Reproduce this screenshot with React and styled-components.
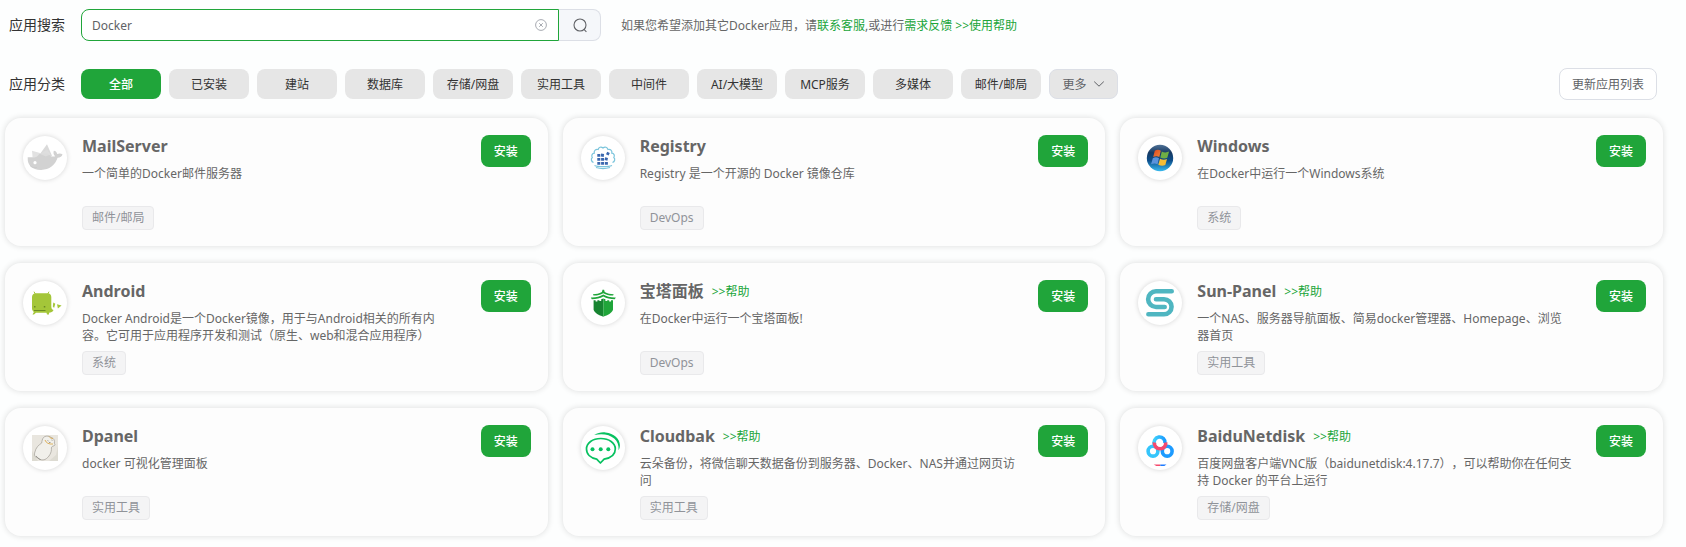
import React, { useState } from "react";
import styled, { createGlobalStyle } from "styled-components";

const GlobalStyle = createGlobalStyle`
  * { box-sizing: border-box; }
  body {
    margin: 0;
    background: #fdfefe;
    color: #606266;
    font-family: "Noto Sans", "Noto Sans CJK SC", sans-serif;
    font-size: 12px;
    line-height: 17px;
    text-spacing-trim: space-all;
  }
  button, input { font: inherit; }
  button { cursor: pointer; }
`;

const Page = styled.main`
  padding: 9px 23px 9px 5px;
`;

const Row = styled.div`
  display: flex;
  align-items: center;
  min-height: 32px;
  padding: 0 6px 0 4px;
  margin-bottom: ${(p) => p.$gap}px;
`;

const RowLabel = styled.label`
  width: 72px;
  flex: none;
  font-size: 14px;
  line-height: 20px;
  color: #333;
`;

const SearchBox = styled.form`
  display: flex;
  width: 520px;
  height: 32px;
`;

const InputFrame = styled.div`
  flex: 1;
  display: flex;
  align-items: center;
  padding: 0 11px 0 10px;
  background: #fff;
  border: 1px solid #20a53a;
  border-radius: 8px 0 0 8px;
`;

const SearchInput = styled.input`
  flex: 1;
  min-width: 0;
  padding: 0;
  border: 0;
  outline: 0;
  background: transparent;
  color: #606266;
`;

const ClearButton = styled.button`
  display: flex;
  padding: 0;
  border: 0;
  background: none;
`;

const SearchButton = styled.button`
  display: flex;
  align-items: center;
  justify-content: center;
  width: 42px;
  padding: 0;
  background: #f5f7fa;
  border: 1px solid #dcdfe6;
  border-left: 0;
  border-radius: 0 8px 8px 0;
`;

const Hint = styled.p`
  margin: 0 0 0 20px;
  color: #666;
`;

const GreenLink = styled.a`
  color: #20a53a;
  text-decoration: none;
`;

const Categories = styled.div`
  display: flex;
  flex: 1;
  gap: 8px;
`;

const Category = styled.button`
  width: 80px;
  height: 30px;
  padding: 0;
  border: 0;
  border-radius: 8px;
  background: ${(p) => (p.$active ? "#20a53a" : "#e6e6e6")};
  color: ${(p) => (p.$active ? "#fff" : "#333")};
  font-weight: ${(p) => (p.$active ? 500 : 400)};
`;

const MoreButton = styled.button`
  display: flex;
  align-items: center;
  justify-content: center;
  gap: 6px;
  width: 69px;
  height: 30px;
  padding: 0;
  border: 1px solid #dcdfe6;
  border-radius: 8px;
  background: #e6e6e6;
  color: #606266;
`;

const UpdateButton = styled.button`
  height: 32px;
  padding: 0 12px;
  border: 1px solid #dcdfe6;
  border-radius: 8px;
  background: #fff;
  color: #606266;
`;

const Grid = styled.section`
  display: grid;
  grid-template-columns: repeat(3, minmax(0, 1fr));
  gap: 17px 15px;
`;

const Card = styled.article`
  display: flex;
  align-items: flex-start;
  min-height: 128px;
  padding: 17px 17px 16px;
  border-radius: 16px;
  background: #fdfdfd;
  box-shadow: 0 0 6px rgba(0, 0, 0, 0.14);
`;

const Logo = styled.div`
  flex: none;
  width: 44px;
  height: 44px;
  margin: 1px 15px 0 1px;
  border-radius: 50%;
  background: #fff;
  box-shadow: 0 0 5px rgba(0, 0, 0, 0.16);

  svg { display: block; width: 44px; height: 44px; }
`;

const Info = styled.div`
  flex: 1;
  min-width: 0;
`;

const Heading = styled.div`
  display: flex;
  align-items: center;
  gap: 8px;
  height: 22px;
`;

const Name = styled.h2`
  margin: 0;
  font-size: 16px;
  line-height: 22px;
  font-weight: 700;
  color: #666;
`;

const Desc = styled.p`
  max-width: 376px;
  min-height: 34px;
  margin: 8px 0 7px;
  color: #666;
`;

const Tag = styled.div`
  width: fit-content;
  height: 24px;
  padding: 0 9px;
  border: 1px solid #e9e9eb;
  border-radius: 4px;
  background: #f4f4f5;
  color: #909399;
  line-height: 22px;
`;

const InstallButton = styled.button`
  flex: none;
  width: 50px;
  height: 32px;
  padding: 0;
  border: 0;
  border-radius: 8px;
  background: #20a53a;
  color: #fff;
  font-weight: 500;
`;

const ClearIcon = () => (
  <svg width="12" height="12" viewBox="0 0 12 12" fill="none" stroke="#a8abb2">
    <circle cx="6" cy="6" r="5.4" />
    <path d="M4.2 4.2l3.6 3.6M7.8 4.2L4.2 7.8" />
  </svg>
);

const SearchIcon = () => (
  <svg width="16" height="16" viewBox="0 0 16 16" fill="none" stroke="#606266" strokeWidth="1.1">
    <circle cx="8" cy="8" r="6" />
    <path d="M12 12.400l2.400 2.400" />
  </svg>
);

const ChevronIcon = () => (
  <svg width="12" height="12" viewBox="0 0 12 12" fill="none" stroke="#606266">
    <path d="M1.2 3.6L6 8.2l4.8-4.6" />
  </svg>
);

const MailServerLogo = () => (
  <svg viewBox="0 0 44 44">
    <path fill="#e2e2e2" d="M9 14.7l8 2.4 1.4 4.4H9.6z" />
    <path fill="#dadada" d="M24 8.3l5 11.4-5 2-7-3.8z" />
    <path fill="#d2d2d2" d="M4.7 21.3h6.8c2-.1 3.200-1.400 4.900-3.400 2.500-.7 6.300-.5 8.600-.2 2.200 2.700 4.500 3.400 7.200 2.500-1.800-1.500-2-3.500-1.400-5.500 2 .2 3 1.500 3.300 3.400 1.700-.9 3.700-1 5.400.2-.4 2-2.300 3.400-4.900 3.500-2.400 7.300-8.200 12-16.400 12.100C9.500 34.100 4.200 29.700 4.700 21.300z" />
    <path fill="#e0e0e0" d="M17 17.9l7-4.500 3.500 5-4.700 2z" opacity=".7" />
    <circle cx="12" cy="26.7" r="1.6" fill="#fff" />
    <path d="M7 29.500c2 2 4 2.500 7 2" stroke="#c9c9c9" strokeWidth=".7" fill="none" />
  </svg>
);

const AndroidLogo = () => (
  <svg viewBox="0 0 44 44">
    <path d="M11 10.700l1.700 3M26 10.700l-1.700 3" stroke="#a4c639" strokeWidth="1" />
    <path fill="#a4c639" d="M13 12.300h11.500c2.300 0 3.800 1.500 3.800 3.800v9.200c0 2 .5 3.200 2.200 3.700-.5 2-2.700 2.700-4.400 2.700l-.1 1.700h-2l-.5-1.700H13l-2 1.900H9.500l1.400-2.500C9.600 30.100 9 28.800 9 27V16.100c0-2.300 1.700-3.800 4-3.800z" />
    <path fill="#a4c639" d="M30.300 21.500l2 1.200-1.200 4.200-1.300-1.300zM34 23.200l4.600 1.300-3.700 3z" />
    <path fill="#6b8a26" d="M11 25h1.500v1.500H11zM20.800 25h1.500v1.500h-1.500zM11 29h11.500v1H11z" />
  </svg>
);

const RegistryLogo = () => (
  <svg viewBox="0 0 44 44">
    <path
      fill="none"
      stroke="#7cc5dc"
      strokeWidth="1.200"
      d="M12.500 28.500c-2.200-.8-2.900-3.500-1.200-5-1.300-2 0-4.200 2-4.300-.6-2.700 1.500-4.400 3.900-3.700.3-2.300 2.900-3.200 4.800-1.500 1.900-1.700 4.500-.8 4.900 1.500 2.500-.7 4.500 1 3.900 3.700 2.100.1 3.300 2.300 2 4.300 1.700 1.500 1 4.200-1.300 5"
      transform="translate(0 -2)"
    />
    <path fill="none" stroke="#7cc5dc" strokeWidth="1.200" d="M13.500 29.500c3 1.500 14 1.500 17.500 0M15 31.500c4 1.200 10 1.200 14 0" />
    <path
      fill="#3a67ae"
      d="M16.300 18h3v2.800h-3zM20.100 17.600l3 .5-.4 2.800-2.800-.3zM16.300 22h3v2.800h-3zM20.100 22h3v2.800h-3zM16.300 25.900h3v2.800h-3zM20.100 25.900h3v2.800h-3zM23.900 25.900h3v2.800h-3zM24.200 21.300l2.800.6-.6 2.800-2.800-.6zM26.200 15.700l2.600 1.200-1.200 2.600L25 18.300z"
    />
  </svg>
);

const WindowsLogo = () => (
  <svg viewBox="0 0 44 44">
    <defs>
      <linearGradient id="orb" x1="0" y1="0" x2="0" y2="1">
        <stop offset="0" stopColor="#4f7196" />
        <stop offset=".3" stopColor="#173a63" />
        <stop offset=".6" stopColor="#0d4f8c" />
        <stop offset="1" stopColor="#39b9ee" />
      </linearGradient>
      <linearGradient id="pane" x1="0" y1="0" x2="1" y2="1">
        <stop offset="0" stopColor="#e0461f" />
        <stop offset="1" stopColor="#f0863a" />
      </linearGradient>
    </defs>
    <circle cx="22" cy="22" r="13.200" fill="url(#orb)" />
    <path fill="url(#pane)" d="M16.800 14.700c2.200-1.200 4.300-1 6 0l-1.500 6.200c-1.900-1-4-1-6.100.2z" />
    <path fill="#6fae45" d="M23.800 15.400c2.300 1.300 4.600 1.300 7.300.2l-1.800 6.200c-2.500 1.100-4.800.8-7-.4z" />
    <path fill="#5b93dc" d="M14.800 22.200c2.200-1.200 4.300-1 6.200 0l-1.500 6c-1.900-1-4.100-1-6.400.1z" />
    <path fill="#f7bd35" d="M22 22.700c2.200 1.200 4.600 1.300 7 .4l-1.700 6c-2.400 1.100-4.700.8-7-.4z" />
  </svg>
);

const BaotaLogo = () => (
  <svg viewBox="0 0 44 44">
    <path fill="#20a53a" d="M21.500 8.700h1.600l.6 2.300c2.800 1.500 5.600 2.200 9 2.200l-.6 1.300c-3.600.1-6.700-.6-9.800-2.300-3.100 1.700-6.200 2.400-9.800 2.300l-.6-1.300c3.400 0 6.200-.7 9-2.200z" />
    <path fill="#20a53a" d="M22.300 13.500c3.500 2.100 7.600 3.200 12.500 3l-1 1.700c-4.500 0-8.300-.8-11.500-2.700-3.200 1.900-7 2.700-11.500 2.700l-1-1.700c4.900.2 9-.9 12.500-3z" />
    <path fill="#178431" d="M12.600 19.300h2v1.200h1.800v-1.300h2V20h1.800v-1.800l2.100-.7v18.200c-4.500-1.700-8.500-3.600-9.700-7z" />
    <path fill="#20a53a" d="M32 19.300h-2v1.200h-1.800v-1.300h-2V20h-1.800v-1.800l-2.100-.7v18.200c4.500-1.700 8.500-3.600 9.700-7z" />
  </svg>
);

const SunPanelLogo = () => (
  <svg viewBox="0 0 44 44" fill="none" stroke="#4fb6c1" strokeWidth="4.600" strokeLinecap="round">
    <path d="M33.700 10.300H18a7.850 7.850 0 0 0 0 15.700h8.700" />
    <path d="M18 18.200h8a7.550 7.550 0 0 1 0 15.100H10.400" />
  </svg>
);

const DpanelLogo = () => (
  <svg viewBox="0 0 44 44">
    <path fill="#e9e6df" d="M9 9h26v26H9z" />
    <path fill="#d6d3ca" d="M9 25l6 10H9zM35 20v15h-9l7-6z" opacity=".6" />
    <path
      fill="#f1f0eb"
      stroke="#a8a59d"
      strokeWidth=".8"
      d="M20.500 11.500c1.500-1.700 5-2 7.500-.2 3 1 4 3.500 3.300 5.900 1 1 .8 2.300-.3 2.600-1.600.4-2.500.8-2.600 2.200.5 4.500-2.400 9.300-6.400 11.500-2.700 1-5.300.3-7.300-1.500-3-.8-3.800-3-2.800-6 .8-4 3.600-7 6.800-9 .2-2 .6-4 1.800-5.500z"
    />
    <path fill="none" stroke="#d9a94e" strokeWidth=".9" d="M22 14c1 3 4 4.500 8 4M26 10.500c1 1.500 2.500 2 4 2" />
    <path fill="none" stroke="#77746e" strokeWidth=".7" d="M24.500 14.500l1 .5M28.500 14l1 .3M26 16.500h1.500M13 30c2 2 3 3 4.500 3.500" />
  </svg>
);

const CloudbakLogo = () => (
  <svg viewBox="0 0 44 44" fill="none" stroke="#07c160" strokeWidth="1.700" strokeLinejoin="round">
    <path d="M19.800 12.500c8.200 0 14.500 4.400 14.500 10.400 0 5.400-4.600 9-11.200 10.200L19.400 37l-3.700-3.900C9.800 32 5.500 28.200 5.500 22.900c0-6 6.100-10.400 14.300-10.400z" />
    <path d="M13.200 8.900c3.700-2 7.300-3 11.300-2.500C33 7.200 38.700 12.500 38.900 19c0 2-.4 3.700-1.300 5.200.3-5.200-1.200-8.700-4.400-11.600-4.800-4.200-11.300-5.200-20-3.700z" fill="#07c160" stroke="none" />
    <g fill="#07c160" stroke="none">
      <circle cx="11.500" cy="23.300" r="2" />
      <circle cx="19.700" cy="23.300" r="2" />
      <circle cx="27.300" cy="23.300" r="2" />
    </g>
  </svg>
);

const BaiduLogo = () => (
  <svg viewBox="0 0 44 44" fill="none" strokeWidth="3.600">
    <defs>
      <linearGradient id="wing" x1="0" y1="0" x2="1" y2="0">
        <stop offset="0" stopColor="#3fd0fb" />
        <stop offset="1" stopColor="#1a9bff" />
      </linearGradient>
    </defs>
    <circle cx="15" cy="25.200" r="4.900" stroke="#35c5fb" />
    <circle cx="29.200" cy="25.200" r="4.900" stroke="#1d9bff" />
    <path d="M27 17.200a5.500 5.500 0 1 0-10.400 1.700" stroke="url(#wing)" />
    <path d="M16.400 16.500c-.4 3.500 2.300 6.300 5.700 6.300s6.200-2.800 5.600-6.300" stroke="#f5496d" />
    <path d="M15.800 38.400h6.500v1.500h-4z" fill="#f5496d" stroke="none" />
    <path d="M22.300 38.400h6.200l-2.200 1.500h-4z" fill="#1d7bff" stroke="none" />
  </svg>
);

const categories = ["全部", "已安装", "建站", "数据库", "存储/网盘", "实用工具", "中间件", "AI/大模型", "MCP服务", "多媒体", "邮件/邮局"];

const apps = [
  { name: "MailServer", desc: "一个简单的Docker邮件服务器", tag: "邮件/邮局", logo: MailServerLogo },
  { name: "Registry", desc: "Registry 是一个开源的 Docker 镜像仓库", tag: "DevOps", logo: RegistryLogo },
  { name: "Windows", desc: "在Docker中运行一个Windows系统", tag: "系统", logo: WindowsLogo },
  { name: "Android", desc: "Docker Android是一个Docker镜像，用于与Android相关的所有内容。它可用于应用程序开发和测试（原生、web和混合应用程序）", tag: "系统", logo: AndroidLogo },
  { name: "宝塔面板", desc: "在Docker中运行一个宝塔面板!", tag: "DevOps", logo: BaotaLogo, help: true },
  { name: "Sun-Panel", desc: "一个NAS、服务器导航面板、简易docker管理器、Homepage、浏览器首页", tag: "实用工具", logo: SunPanelLogo, help: true },
  { name: "Dpanel", desc: "docker 可视化管理面板", tag: "实用工具", logo: DpanelLogo },
  { name: "Cloudbak", desc: "云朵备份，将微信聊天数据备份到服务器、Docker、NAS并通过网页访问", tag: "实用工具", logo: CloudbakLogo, help: true },
  { name: "BaiduNetdisk", desc: "百度网盘客户端VNC版（baidunetdisk:4.17.7），可以帮助你在任何支持 Docker 的平台上运行", tag: "存储/网盘", logo: BaiduLogo, help: true },
];

function AppCard({ app }) {
  const Icon = app.logo;
  return (
    <Card>
      <Logo><Icon /></Logo>
      <Info>
        <Heading>
          <Name>{app.name}</Name>
          {app.help && <GreenLink href="#help">&gt;&gt;帮助</GreenLink>}
        </Heading>
        <Desc>{app.desc}</Desc>
        <Tag>{app.tag}</Tag>
      </Info>
      <InstallButton type="button">安装</InstallButton>
    </Card>
  );
}

export default function App() {
  const [query, setQuery] = useState("Docker");
  const [active, setActive] = useState("全部");

  return (
    <>
      <GlobalStyle />
      <Page>
        <Row $gap={27}>
          <RowLabel htmlFor="app-search">应用搜索</RowLabel>
          <SearchBox onSubmit={(e) => e.preventDefault()}>
            <InputFrame>
              <SearchInput id="app-search" type="text" value={query} onChange={(e) => setQuery(e.target.value)} />
              <ClearButton type="button" aria-label="清空" onClick={() => setQuery("")}><ClearIcon /></ClearButton>
            </InputFrame>
            <SearchButton type="submit" aria-label="搜索"><SearchIcon /></SearchButton>
          </SearchBox>
          <Hint>
            如果您希望添加其它Docker应用，请<GreenLink href="#service">联系客服</GreenLink>,或进行<GreenLink href="#feedback">需求反馈</GreenLink>{" "}
            <GreenLink href="#help">&gt;&gt;使用帮助</GreenLink>
          </Hint>
        </Row>
        <Row $gap={18}>
          <RowLabel as="span">应用分类</RowLabel>
          <Categories>
            {categories.map((name) => (
              <Category key={name} type="button" $active={name === active} onClick={() => setActive(name)}>{name}</Category>
            ))}
            <MoreButton type="button">更多<ChevronIcon /></MoreButton>
          </Categories>
          <UpdateButton type="button">更新应用列表</UpdateButton>
        </Row>
        <Grid>
          {apps.map((app) => <AppCard key={app.name} app={app} />)}
        </Grid>
      </Page>
    </>
  );
}
